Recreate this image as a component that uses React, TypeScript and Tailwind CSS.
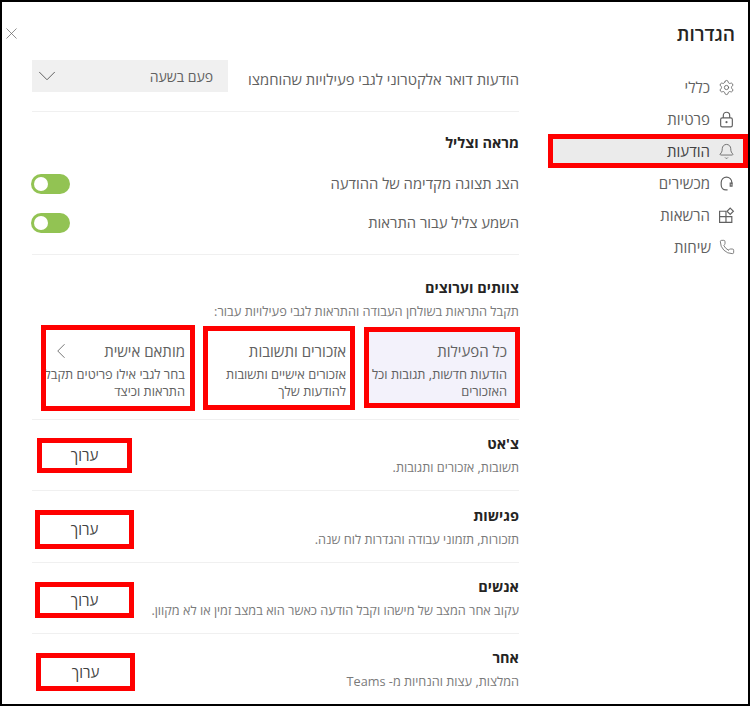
import React from 'react';
import { Bell, ChevronDown, ChevronLeft, Phone, Settings, X } from 'lucide-react';

function LicenseIcon() {
  return (
    <svg width="17" height="17" viewBox="0 0 16 16" fill="none" stroke="currentColor" strokeWidth="1.1">
      <path d="M1.5 4h6v5H13v5.5H1.5z" />
      <path d="M7.5 9v5.5M1.5 9h6" />
      <path d="M11.5 1l3 3-3 3-3-3z" />
    </svg>
  );
}

function LockIcon() {
  return (
    <svg width="17" height="17" viewBox="0 0 16 16" fill="none" stroke="currentColor" strokeWidth="1.1">
      <rect x="2.5" y="6.5" width="11" height="8.5" rx="1.5" />
      <path d="M5 6.5V4.2a3 3 0 0 1 6 0v2.3" />
      <circle cx="8" cy="10.5" r="1" fill="currentColor" stroke="none" />
    </svg>
  );
}

function HeadsetIcon() {
  return (
    <svg width="17" height="17" viewBox="0 0 16 16" fill="none" stroke="currentColor" strokeWidth="1.1">
      <path d="M13 8.5V7A5 5 0 0 0 3 7v2.500c0 2.500 1.800 4.500 4.500 4.500H9" />
      <path d="M11.5 7.5h1.700v3h-1.700z" />
    </svg>
  );
}

const navItems = [
  { label: 'כללי', icon: <Settings size={17} strokeWidth={1.2} /> },
  { label: 'פרטיות', icon: <LockIcon /> },
  { label: 'הודעות', icon: <Bell size={17} strokeWidth={1.2} />, active: true },
  { label: 'מכשירים', icon: <HeadsetIcon /> },
  { label: 'הרשאות', icon: <LicenseIcon /> },
  { label: 'שיחות', icon: <Phone size={16} strokeWidth={1.2} /> },
];

const editRows = [
  { title: "צ'אט", sub: 'תשובות, אזכורים ותגובות.', box: 'mt-[18px] ml-[5px] w-[95px] h-[35px]', height: 'h-[71px]' },
  { title: 'פגישות', sub: 'תזכורות, תזמוני עבודה והגדרות לוח שנה.', box: 'mt-[19px] ml-[3px] w-[99px] h-[39px]', height: 'h-[72px]' },
  { title: 'אנשים', sub: 'עקוב אחר המצב של מישהו וקבל הודעה כאשר הוא במצב זמין או לא מקוון.', box: 'mt-[19px] ml-[3px] w-[99px] h-[36px]', height: 'h-[71px]' },
  { title: 'אחר', sub: 'המלצות, עצות והנחיות מ- Teams', box: 'mt-[19px] ml-[4px] w-[99px] h-[38px]', height: 'h-[70px]' },
];

function Toggle() {
  return (
    <div className="-ml-[1px] flex h-[20px] w-[39px] items-center justify-end rounded-full bg-[#92c353] px-[3px]">
      <div className="h-[14px] w-[14px] rounded-full bg-white" />
    </div>
  );
}

function ModeCard({ title, lines, chevron, className, titleClass }: { title: string; lines: string[]; chevron?: boolean; className: string; titleClass: string }) {
  return (
    <div className={`shrink-0 overflow-hidden border-[5px] border-[#f00] ${className}`}>
      <div className={`flex h-[20px] items-center justify-between pl-[2px] text-[15px] leading-[20px] text-[#616161] ${titleClass}`}>
        <span>{title}</span>
        {chevron && <ChevronLeft size={26} strokeWidth={0.8} />}
      </div>
      <div className="mt-[5px] whitespace-nowrap text-[12.8px] leading-[17px] text-[#616161]">
        {lines.map((l) => (
          <div key={l}>{l}</div>
        ))}
      </div>
    </div>
  );
}

export default function App() {
  return (
    <div dir="rtl" className="relative flex h-[706px] w-[750px] overflow-hidden border-2 border-black bg-white font-['Open_Sans','Liberation_Sans',sans-serif]">
      <aside className="w-[198px] shrink-0">
        <h1 className="mt-[20px] pr-[13px] text-[19px] font-semibold leading-[24px] text-[#252423]">הגדרות</h1>
        <nav className="mt-[25px]">
          {navItems.map((item) => (
            <div
              key={item.label}
              className={
                item.active
                  ? 'relative -my-[1px] -ml-[2px] flex h-[34px] items-center gap-[8px] border-[5px] border-[#f00] bg-[#ebebeb] pr-[8px] text-[15px] text-[#424242]'
                  : 'flex h-[32px] items-center gap-[8px] pr-[13px] text-[15px] text-[#616161]'
              }
            >
              <span className="text-[#616161]">{item.icon}</span>
              <span>{item.label}</span>
            </div>
          ))}
        </nav>
      </aside>

      <main className="mr-[31px] w-[487px] shrink-0 pt-[58px]">
        <div className="flex h-[52px] items-start justify-between border-b border-[#f0f0f0]">
          <span className="mt-[9px] text-[14.8px] leading-[20px] text-[#616161]">הודעות דואר אלקטרוני לגבי פעילויות שהוחמצו</span>
          <div className="flex h-[32px] w-[196px] items-center justify-between bg-[#f0f0f0] pr-[15px] text-[14px] text-[#616161]">
            <span>פעם בשעה</span>
            <ChevronDown size={30} strokeWidth={0.8} />
          </div>
        </div>

        <div className="h-[143px] border-b border-[#f0f0f0] pt-[21px]">
          <h2 className="text-[14.5px] font-bold leading-[20px] text-[#252423]">מראה וצליל</h2>
          <div className="mt-[11px] flex h-[39px] items-center justify-between">
            <span className="text-[14.8px] text-[#616161]">הצג תצוגה מקדימה של ההודעה</span>
            <Toggle />
          </div>
          <div className="flex h-[39px] items-center justify-between">
            <span className="text-[14.8px] text-[#616161]">השמע צליל עבור התראות</span>
            <Toggle />
          </div>
        </div>

        <div className="h-[165px] border-b border-[#f0f0f0] pt-[23px]">
          <h2 className="text-[14.5px] font-bold leading-[20px] text-[#252423]">צוותים וערוצים</h2>
          <p className="mt-[4px] text-[12.8px] leading-[18px] text-[#7a7a7a]">תקבל התראות בשולחן העבודה והתראות לגבי פעילויות עבור:</p>
          <div className="mt-[8px] flex items-start">
            <ModeCard
              title="כל הפעילות"
              lines={['הודעות חדשות, תגובות וכל', 'האזכורים']}
              className="-mr-[1px] -mt-[1px] h-[81px] w-[156px] bg-[#f3f2fb] pr-[8px]"
              titleClass="mt-[9px]"
            />
            <ModeCard
              title="אזכורים ותשובות"
              lines={['אזכורים אישיים ותשובות', 'להודעות שלך']}
              className="-mt-[2px] mr-[9px] h-[84px] w-[152px] pr-[4px]"
              titleClass="mt-[10px]"
            />
            <ModeCard
              title="מותאם אישית"
              lines={['בחר לגבי אילו פריטים תקבל', 'התראות וכיצד']}
              chevron
              className="-mt-[3px] mr-[8px] h-[86px] w-[154px] pr-[5px]"
              titleClass="mt-[11px]"
            />
          </div>
        </div>

        {editRows.map((row, i) => (
          <div
            key={row.title}
            className={`flex items-center justify-between ${row.height} ${i < editRows.length - 1 ? 'border-b border-[#f0f0f0]' : ''}`}
          >
            <div>
              <div className="text-[14.5px] font-bold leading-[20px] text-[#252423]">{row.title}</div>
              <div className="mt-[4px] text-[12.7px] leading-[18px] text-[#7a7a7a]">{row.sub}</div>
            </div>
            <button className={`flex shrink-0 items-center justify-center self-start border-[5px] border-[#f00] bg-white text-[15px] text-[#424242] ${row.box}`}>
              ערוך
            </button>
          </div>
        ))}
      </main>

      <X size={19} strokeWidth={0.9} className="absolute left-0 top-[22px] text-[#616161]" />
    </div>
  );
}
